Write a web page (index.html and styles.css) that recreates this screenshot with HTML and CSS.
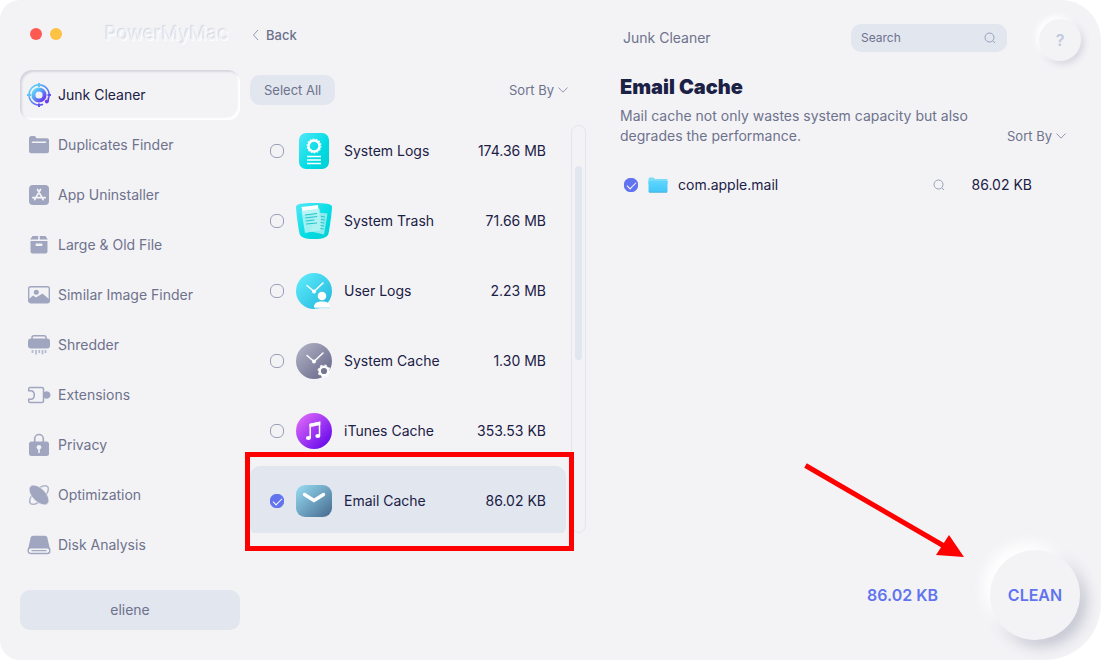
FILE: index.html
```html
<!DOCTYPE html>
<html lang="en">
<head>
<meta charset="utf-8">
<meta name="viewport" content="width=device-width, initial-scale=1">
<title>PowerMyMac</title>
<link rel="stylesheet" href="styles.css">
</head>
<body>
<div class="window">
  <aside class="sidebar">
    <div class="brand">
      <button class="dot dot-close" type="button" aria-label="Close"></button>
      <button class="dot dot-min" type="button" aria-label="Minimize"></button>
      <span class="brand-name">PowerMyMac</span>
    </div>
    <nav class="nav">
      <a class="nav-item nav-active" href="#junk">
        <svg class="nav-icon" viewBox="0 0 24 24">
          <defs><linearGradient id="junk" x1="0" y1="0" x2="1" y2="1"><stop offset="0.1" stop-color="#5fd0f8"/><stop offset="0.5" stop-color="#5b8cf6"/><stop offset="0.9" stop-color="#6a3ff0"/></linearGradient></defs>
          <circle cx="12" cy="12" r="5.600" fill="none" stroke="url(#junk)" stroke-width="4"/>
          <path d="M16 21.200A10.100 10.100 0 1 1 21.600 15.200" fill="none" stroke="url(#junk)" stroke-width="1.600"/>
          <path d="M12 0v4M0 12h4" stroke="#5fc4f8" stroke-width="2"/>
          <path d="M20.500 12h3.500M12 20.500V24" stroke="#5a55ee" stroke-width="2"/>
          <path d="M21.300 14.500v3.500" stroke="#6a3ff0" stroke-width="1.600"/><circle cx="19.800" cy="18.600" r="2" fill="#6a3ff0"/>
        </svg>
        Junk Cleaner</a>
      <a class="nav-item" href="#duplicates">
        <svg class="nav-icon" viewBox="0 0 24 24"><path fill="currentColor" d="M2 5.500Q2 3 4.200 3H7q1.200 0 1.800 1l.7 1.200H20q2 0 2 2V18q0 2.200-2.200 2.200H4.200Q2 20.200 2 18z"/><path d="M5.500 9.200h13" stroke="#f3f3f6" stroke-width="1.600" stroke-linecap="round"/></svg>
        Duplicates Finder</a>
      <a class="nav-item" href="#uninstaller">
        <svg class="nav-icon" viewBox="0 0 24 24"><rect x="2" y="2" width="20" height="20" rx="4" fill="currentColor"/><path d="M10.500 6.500l5.700 10.200M13.500 6.500L7.700 16.700M5.800 14.600h12.400" fill="none" stroke="#f3f3f6" stroke-width="1.700" stroke-linecap="round"/></svg>
        App Uninstaller</a>
      <a class="nav-item" href="#large">
        <svg class="nav-icon" viewBox="0 0 24 24"><path fill="currentColor" d="M5.500 3h5.700v3.600H3.200zM12.800 3h5.700l2.300 3.600h-8zM3.500 8h17v10.500a2 2 0 0 1-2 2h-13a2 2 0 0 1-2-2z"/><rect x="8.500" y="10.500" width="7" height="2.400" rx="1" fill="#f3f3f6"/></svg>
        Large &amp; Old File</a>
      <a class="nav-item" href="#similar">
        <svg class="nav-icon" viewBox="0 0 24 24"><rect x="1.700" y="3.700" width="20.600" height="16" rx="2" fill="none" stroke="currentColor" stroke-width="1.400"/><circle cx="9.300" cy="9.300" r="2.500" fill="currentColor"/><path fill="currentColor" d="M2 16l4-3.500 3 2L15.500 10.500 22 16v3.500H2z"/></svg>
        Similar Image Finder</a>
      <a class="nav-item" href="#shredder">
        <svg class="nav-icon" viewBox="0 0 24 24"><path d="M5 6V4.500q0-1.800 2-1.800h10q2 0 2 1.800V6" fill="none" stroke="currentColor" stroke-width="1.500"/><rect x="1" y="5.500" width="22" height="10" rx="3" fill="currentColor"/><path d="M5.500 17v3M9 17v4.500M12.200 17v3M15.500 17v4.200M18.500 17v3" stroke="currentColor" stroke-width="1.800" opacity=".7"/></svg>
        Shredder</a>
      <a class="nav-item" href="#extensions">
        <svg class="nav-icon" viewBox="0 0 24 24"><path d="M1.700 7.500V6q0-1.500 1.500-1.500h11.500Q16.500 4.500 16.500 6v12q0 1.500-1.800 1.500H3.200Q1.700 19.500 1.700 18v-1.700H3.500Q7.300 16.300 7.300 12T3.500 7.700H1.700z" fill="none" stroke="currentColor" stroke-width="1.500"/><path fill="currentColor" d="M16.500 9.500q3-2 5-.8 2 1 2 3.300t-2 3.300q-2 1.200-5-.8z"/></svg>
        Extensions</a>
      <a class="nav-item" href="#privacy">
        <svg class="nav-icon" viewBox="0 0 24 24"><path d="M7.700 9.500V5.800a4.300 4.300 0 0 1 8.600 0v3.700" fill="none" stroke="currentColor" stroke-width="1.600"/><rect x="2" y="8.500" width="20" height="14.500" rx="2.500" fill="currentColor"/><circle cx="12" cy="14.200" r="2.300" fill="#f3f3f6"/><path d="M12 14v6" stroke="#f3f3f6" stroke-width="1.600"/></svg>
        Privacy</a>
      <a class="nav-item" href="#optimization">
        <svg class="nav-icon" viewBox="0 0 24 24"><ellipse cx="12" cy="12" rx="12" ry="5.500" transform="rotate(-45 12 12)" fill="none" stroke="currentColor" stroke-width="1.500" opacity=".8"/><ellipse cx="12" cy="12" rx="12.300" ry="6.600" transform="rotate(45 12 12)" fill="currentColor" stroke="#f3f3f6" stroke-width=".6"/></svg>
        Optimization</a>
      <a class="nav-item" href="#disk">
        <svg class="nav-icon" viewBox="0 0 24 24"><path fill="currentColor" d="M6 2.800h12q1.800 0 2.300 1.700l2.500 11H1.200l2.500-11Q4.200 2.800 6 2.800z"/><rect x="1.200" y="14.700" width="21.600" height="5.800" rx="2.500" fill="#f3f3f6" stroke="currentColor" stroke-width="1.400"/><path d="M4.500 17.600h15" stroke="currentColor" stroke-width="1.200"/></svg>
        Disk Analysis</a>
    </nav>
    <button class="account" type="button">eliene</button>
  </aside>

  <section class="categories">
    <div class="back-row">
      <a class="back" href="#back"><svg class="back-icon" viewBox="0 0 8 12"><path d="M6 1L1.500 6 6 11" fill="none" stroke="currentColor"/></svg>Back</a>
    </div>
    <div class="toolbar">
      <button class="select-all" type="button">Select All</button>
      <button class="sort" type="button" aria-haspopup="menu">Sort By<svg class="chevron" viewBox="0 0 10 6"><path d="M.5 .5L5 5.200 9.500 .5" fill="none" stroke="currentColor"/></svg></button>
    </div>
    <div class="list-area">
      <ul class="list">
        <li><label class="row">
          <input class="check" type="checkbox">
          <svg class="row-icon" viewBox="0 0 36 36"><defs><linearGradient id="cyan" x1="0" y1="0" x2="1" y2="1"><stop offset="0" stop-color="#53e8fa"/><stop offset=".6" stop-color="#00dce2"/><stop offset="1" stop-color="#04cdd4"/></linearGradient></defs><rect x="3" width="30" height="36" rx="7" fill="url(#cyan)"/><circle cx="18" cy="13" r="5.500" fill="none" stroke="#fff" stroke-width="2.400"/><circle cx="18" cy="13" r="6.900" fill="none" stroke="#fff" stroke-width="1.200" stroke-dasharray="1.600 1.500"/><path d="M11 23.500h14M11 27h14M11 30.500h14" stroke="#fff" stroke-width="1.500"/></svg>
          <span class="row-name">System Logs</span><span class="row-size">174.36 MB</span></label></li>
        <li><label class="row">
          <input class="check" type="checkbox">
          <svg class="row-icon" viewBox="0 0 36 36"><path fill="url(#cyan)" d="M0 3.500C0 1 7 0 18 0s18 1 18 3.500c0 4-2 20-3.500 27C31.700 34 28 36 18 36S4.300 34 3.500 30.500C2 23.500 0 7.500 0 3.500z"/><path d="M5.500 4l16.500-2 1 8-16 2z" fill="#fff"/><path d="M18 9l13.500 1.500-3.500 21-13-3z" fill="#8deaec"/><path d="M5.500 8l18-2.500 1.800 21.500-16.300 3z" fill="#b2f2f2" opacity=".88"/><path d="M9 12l12-1.500M9.200 15l12-1.500M9.500 18l9-1M10 21l11-1M25 13.500l4 .5M25 16.500l4 .5M24.500 19.500l4 .5M24.500 22.500l3.500.5M24.200 25.500l3.500.5" stroke="#26c5cb" stroke-width="1"/></svg>
          <span class="row-name">System Trash</span><span class="row-size">71.66 MB</span></label></li>
        <li><label class="row">
          <input class="check" type="checkbox">
          <svg class="row-icon" viewBox="0 0 36 36"><defs><linearGradient id="blue" x1="0" y1="0" x2="1" y2="1"><stop offset="0" stop-color="#62effd"/><stop offset="1" stop-color="#1fb4db"/></linearGradient></defs><circle cx="18" cy="18" r="18" fill="url(#blue)"/><path d="M11 12.500l7 6 9-8.500" fill="none" stroke="#fff" stroke-width="1.500" stroke-linecap="round"/><circle cx="18" cy="18.500" r="2" fill="#fff"/><circle cx="26" cy="23" r="4.300" fill="#fff"/><path d="M18 34c0-4 3-5.500 8-5.500s8 1.500 8 5.500z" fill="#fff"/><path d="M18 34h16v1.500H19z" fill="#c8eef6"/></svg>
          <span class="row-name">User Logs</span><span class="row-size">2.23 MB</span></label></li>
        <li><label class="row">
          <input class="check" type="checkbox">
          <svg class="row-icon" viewBox="0 0 36 36"><defs><linearGradient id="gray" x1="0" y1="0" x2="1" y2="1"><stop offset=".1" stop-color="#acaec2"/><stop offset=".9" stop-color="#6b6b8c"/></linearGradient></defs><circle cx="18" cy="18" r="18" fill="url(#gray)"/><path d="M11 12.500l7 6 9-8.500" fill="none" stroke="#fff" stroke-width="1.500" stroke-linecap="round"/><circle cx="18" cy="18.500" r="2" fill="#fff"/><circle cx="28" cy="28" r="4.300" fill="#77778f" stroke="#fff" stroke-width="2.400"/><circle cx="28" cy="28" r="5.900" fill="none" stroke="#fff" stroke-width="1.200" stroke-dasharray="2.300 2.300"/></svg>
          <span class="row-name">System Cache</span><span class="row-size">1.30 MB</span></label></li>
        <li><label class="row">
          <input class="check" type="checkbox">
          <svg class="row-icon" viewBox="0 0 36 36"><defs><linearGradient id="purple" x1="0" y1="0" x2="1" y2="1"><stop offset=".1" stop-color="#dc66fa"/><stop offset=".9" stop-color="#6509ea"/></linearGradient></defs><circle cx="18" cy="18" r="18" fill="url(#purple)"/><path d="M14.200 25V11.500l9.300-2V23" fill="none" stroke="#fff" stroke-width="1.500"/><path d="M13.500 10.800l10.800-2.300v3.500l-10.800 2.300z" fill="#fff"/><ellipse cx="12.400" cy="25" rx="2.500" ry="1.900" fill="#fff"/><ellipse cx="21.800" cy="23" rx="2.500" ry="1.900" fill="#fff"/></svg>
          <span class="row-name">iTunes Cache</span><span class="row-size">353.53 KB</span></label></li>
        <li><label class="row row-selected">
          <input class="check" type="checkbox" checked>
          <svg class="row-icon" viewBox="0 0 36 36"><defs><linearGradient id="mail" x1="0" y1="0" x2="1" y2="1"><stop offset=".05" stop-color="#94d8ef"/><stop offset="1" stop-color="#45698e"/></linearGradient></defs><rect y="2" width="36" height="32" rx="9" fill="url(#mail)"/><path d="M8.500 11.500l9.500 6 9.500-6" fill="none" stroke="#fff" stroke-width="3.400" stroke-linecap="round"/></svg>
          <span class="row-name">Email Cache</span><span class="row-size">86.02 KB</span></label></li>
      </ul>
      <div class="track"><div class="thumb"></div></div>
      <div class="callout"></div>
    </div>
  </section>

  <main class="detail">
    <header class="detail-head">
      <span class="detail-section">Junk Cleaner</span>
      <div class="search">
        <input class="search-input" type="text" placeholder="Search" aria-label="Search">
        <svg class="lens" viewBox="0 0 12 12"><circle cx="5.500" cy="5.500" r="4.500" fill="none" stroke="currentColor"/><path d="M9 9l2 2" stroke="currentColor"/></svg>
      </div>
      <button class="help" type="button" aria-label="Help">?</button>
    </header>
    <h1 class="title">Email Cache</h1>
    <div class="intro">
      <p class="description">Mail cache not only wastes system capacity but also degrades the performance.</p>
      <button class="sort" type="button" aria-haspopup="menu">Sort By<svg class="chevron" viewBox="0 0 10 6"><path d="M.5 .5L5 5.200 9.500 .5" fill="none" stroke="currentColor"/></svg></button>
    </div>
    <div class="file">
      <input class="check" type="checkbox" id="file-mail" checked>
      <svg class="folder" viewBox="0 0 20 16"><defs><linearGradient id="folder" x1="0" y1="0" x2="0" y2="1"><stop offset="0" stop-color="#5fd5fd"/><stop offset="1" stop-color="#41c6f8"/></linearGradient></defs><path d="M.5 2q0-1.500 1.500-1.500h3.500L7 2h11.500q1 0 1 1v4H.5z" fill="#7adcf5"/><path d="M.5 4h19v10.500q0 1-1 1h-17q-1 0-1-1z" fill="url(#folder)"/><path d="M1 15.200h18" stroke="#52aed2" stroke-width=".8"/></svg>
      <label class="file-name" for="file-mail">com.apple.mail</label>
      <button class="reveal" type="button" aria-label="Show file"><svg class="lens" viewBox="0 0 12 12"><circle cx="5.500" cy="5.500" r="4.500" fill="none" stroke="currentColor"/><path d="M9 9l2 2" stroke="currentColor"/></svg></button>
      <span class="file-size">86.02 KB</span>
    </div>
    <footer class="actions">
      <span class="total">86.02 KB</span>
      <button class="clean" type="button">CLEAN</button>
    </footer>
  </main>
  <svg class="arrow" viewBox="0 0 160 96"><path d="M1.500 3.500L140 84" stroke="#fe0000" stroke-width="5"/><path d="M145 73l15 22-28-2z" fill="#fe0000"/></svg>
</div>
</body>
</html>
```
FILE: styles.css
```css
* { box-sizing: border-box; }

body {
  margin: 0;
  background: #fff;
  color: #1b2045;
  font: 14px/20px Inter, "Liberation Sans", sans-serif;
}

button, input { font: inherit; color: inherit; }
button { border: 0; padding: 0; background: none; cursor: pointer; }
a { color: inherit; text-decoration: none; }

.window {
  position: relative;
  display: grid;
  grid-template-columns: 240px 336px 1fr;
  min-height: 100vh;
  background: #f3f3f6;
  border-radius: 20px 40px 56px 20px;
  column-gap: 10px;
  overflow: hidden;
}

.sidebar {
  display: flex;
  flex-direction: column;
  padding: 0 0 30px 20px;
}

.brand {
  display: flex;
  align-items: center;
  gap: 8px;
  height: 70px;
  padding: 0 0 2px 10px;
}
.dot { width: 12px; height: 12px; border-radius: 50%; }
.dot-close { background: #fe5a52; }
.dot-min { background: #fdc143; }
.brand-name {
  margin-left: 35px;
  color: #f3f3f6;
  font-size: 19px;
  text-shadow: -1px -1px 1px #d4d4de, 1px 1px 1px #fff;
}

.nav { display: flex; flex-direction: column; }
.nav-item {
  display: flex;
  align-items: center;
  gap: 7px;
  height: 50px;
  padding-left: 7px;
  color: #6e728c;
}
.nav-icon { width: 24px; height: 24px; color: #a0a6bf; }
.nav-active {
  color: #1b2045;
  border-radius: 12px;
  box-shadow: inset 2px 2px 2px #d5d5df, inset -2px -2px 2px #fff;
}

.account {
  height: 40px;
  margin-top: auto;
  border-radius: 10px;
  background: #e1e6ef;
  color: #6e728c;
}

.categories { display: flex; flex-direction: column; }
.back-row { display: flex; align-items: center; height: 70px; padding-left: 2px; }
.back { display: flex; align-items: center; gap: 6px; color: #6e728c; font-size: 13px; font-weight: 500; }
.back-icon { width: 8px; height: 12px; color: #9298b2; }

.toolbar {
  display: flex;
  align-items: center;
  justify-content: space-between;
  padding: 5px 18px 11px 0;
}
.select-all {
  height: 30px;
  padding: 0 14px;
  border-radius: 10px;
  background: #e1e6ef;
  color: #6e728c;
  font-size: 13px;
}
.sort { display: flex; align-items: center; gap: 4px; color: #6e728c; font-size: 13px; }
.chevron { width: 10px; height: 6px; color: #9298b2; }

.list-area { position: relative; display: flex; gap: 5px; height: 417px; }
.list { flex: 1; margin: 0; padding: 0; list-style: none; overflow: hidden; }
.row {
  display: flex;
  align-items: center;
  gap: 12px;
  height: 70px;
  padding: 0 20px;
  border-radius: 10px;
}
.row-selected { background: #e1e6ef; }
.row-icon { width: 36px; height: 36px; }
.row-name { flex: 1; }

.check {
  appearance: none;
  display: grid;
  place-items: center;
  width: 14px;
  height: 14px;
  margin: 0;
  border: 1px solid #9a9fb8;
  border-radius: 6px;
}
.check:checked { border-color: #6173ee; background: #6173ee; }
.check:checked::after {
  content: "";
  width: 8px;
  height: 4px;
  margin-bottom: 2px;
  border: solid #fff;
  border-width: 0 0 1px 1px;
  rotate: -45deg;
}

.track {
  width: 15px;
  margin-top: 9px;
  padding: 40px 3px;
  border: 1px solid #e3e5ee;
  border-radius: 8px;
}
.thumb { height: 194px; border-radius: 4px; background: #e1e6ef; }

.callout {
  position: absolute;
  left: -5px;
  right: 12px;
  bottom: -18px;
  height: 99px;
  border: 5px solid #fe0000;
}

.detail { display: flex; flex-direction: column; padding: 19px 20px 20px 24px; }
.detail-head { display: flex; align-items: center; padding-left: 3px; height: 42px; }
.detail-section { flex: 1; margin-bottom: 4px; color: #6e728c; }
.search {
  display: flex;
  align-items: center;
  width: 156px;
  height: 28px;
  margin: 0 32px 4px 0;
  padding: 0 11px 0 10px;
  border-radius: 10px;
  background: #e1e6ef;
}
.search-input { flex: 1; min-width: 0; padding: 0; border: 0; outline: 0; background: none; font-size: 12px; }
.search-input::placeholder { color: #6e728c; opacity: 1; }
.lens { flex: none; width: 12px; height: 12px; color: #9aa0b8; }
.help {
  width: 42px;
  height: 42px;
  border-radius: 50%;
  background: #f3f3f6;
  box-shadow: -3px -3px 6px #fff, 3px 3px 6px #d5d5df;
  color: #c1c9dc;
  font-size: 16px;
  font-weight: 600;
}

.title { margin: 14px 0 7px; font-size: 20px; line-height: 24px; font-weight: 900; }
.intro { display: flex; align-items: flex-end; justify-content: space-between; padding-right: 15px; }
.description { max-width: 350px; margin: 0; color: #6e728c; }

.file { display: flex; align-items: center; margin-top: 29px; padding: 0 49px 0 4px; }
.folder { width: 20px; height: 16px; margin: 0 10px; }
.file-name { flex: 1; }
.reveal { display: flex; margin-right: 27px; }

.actions {
  display: flex;
  align-items: center;
  justify-content: flex-end;
  gap: 52px;
  margin-top: auto;
  padding-right: 1px;
  color: #6173ee;
  font-size: 16px;
  font-weight: 600;
}
.clean {
  width: 90px;
  height: 90px;
  border-radius: 50%;
  background: #f3f3f6;
  box-shadow: -7px -7px 14px #fff, 7px 7px 14px #c6c6d2;
}

.arrow {
  position: absolute;
  right: 137px;
  bottom: 102px;
  width: 160px;
  height: 96px;
}
```
